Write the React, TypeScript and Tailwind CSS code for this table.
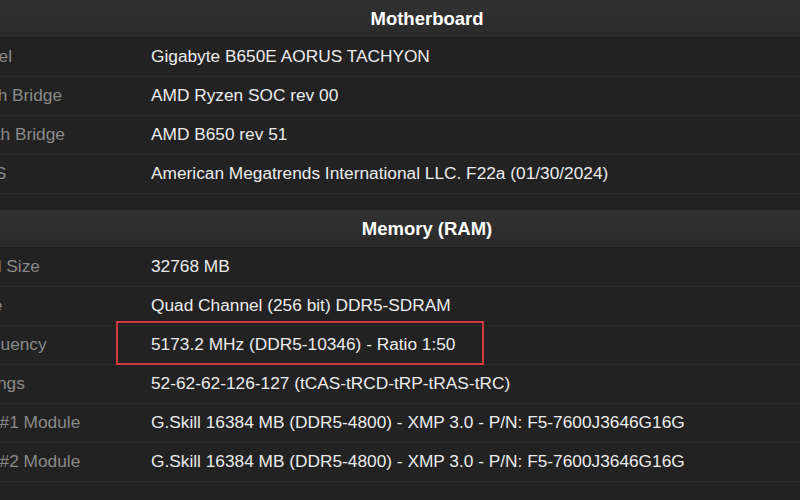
const MOTHERBOARD = [
  { label: 'Model', value: 'Gigabyte B650E AORUS TACHYON' },
  { label: 'North Bridge', value: 'AMD Ryzen SOC rev 00' },
  { label: 'South Bridge', value: 'AMD B650 rev 51' },
  { label: 'BIOS', value: 'American Megatrends International LLC. F22a (01/30/2024)' },
];

const MEMORY = [
  { label: 'Total Size', value: '32768 MB' },
  { label: 'Type', value: 'Quad Channel (256 bit) DDR5-SDRAM' },
  { label: 'Frequency', value: '5173.2 MHz (DDR5-10346) - Ratio 1:50', marked: true },
  { label: 'Timings', value: '52-62-62-126-127 (tCAS-tRCD-tRP-tRAS-tRC)' },
  { label: 'Slot #1 Module', value: 'G.Skill 16384 MB (DDR5-4800) - XMP 3.0 - P/N: F5-7600J3646G16G' },
  { label: 'Slot #2 Module', value: 'G.Skill 16384 MB (DDR5-4800) - XMP 3.0 - P/N: F5-7600J3646G16G' },
];

export default function App() {
  return (
    <div
      className="w-[800px] h-[500px] overflow-hidden bg-[#222222] flex flex-col"
      style={{ fontFamily: '"Liberation Sans", Arial, sans-serif' }}
    >
      <Section title="Motherboard" rows={MOTHERBOARD} />
      <div className="h-[16px] shrink-0" />
      <Section title="Memory (RAM)" rows={MEMORY} />
    </div>
  );
}

type Row = { label: string; value: string; marked?: boolean };

function Section({ title, rows }: { title: string; rows: Row[] }) {
  return (
    <div className="flex flex-col">
      <div className="h-[38px] shrink-0 flex items-center justify-center pl-[54px] bg-gradient-to-b from-[#323232] to-[#2a2a2a] border-b border-[#1c1c1c] text-[18.5px] font-bold text-white">
        {title}
      </div>
      {rows.map((r) => (
        <div key={r.label} className="relative h-[39px] shrink-0 flex items-center border-b border-[#2a2a2a] text-[17.3px]">
          <span className="w-[186px] shrink-0 ml-[-35px] text-[#8a8a8a] whitespace-nowrap">{r.label}</span>
          <span className="text-[#ececec] whitespace-nowrap">{r.value}</span>
          {/* highlight box */}
          {r.marked && (
            <span className="absolute left-[116px] top-[-5px] w-[368px] h-[44px] border-2 border-[#cf3a3f]" />
          )}
        </div>
      ))}
    </div>
  );
}
